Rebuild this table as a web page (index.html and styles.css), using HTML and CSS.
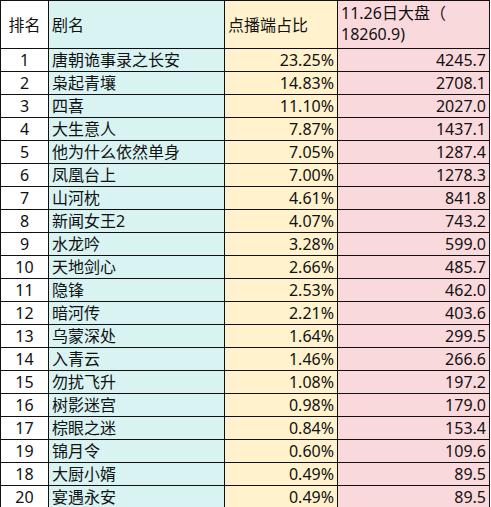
FILE: index.html
```html
<!DOCTYPE html>
<html lang="zh-CN">

<head>
    <meta charset="UTF-8">
    <title>点播端占比</title>
    <link rel="stylesheet" href="styles.css">
</head>

<body>
    <!-- 排行表 -->
    <table class="rank">
        <colgroup>
            <col class="c-rank">
            <col class="c-name">
            <col class="c-pct">
            <col class="c-val">
        </colgroup>
        <tr class="head">
            <td class="rank-no">排名</td>
            <td class="name">剧名</td>
            <td class="pct">点播端占比</td>
            <td class="val">11.26日大盘（ 18260.9)</td>
        </tr>
        <tr><td class="rank-no">1</td><td class="name">唐朝诡事录之长安</td><td class="pct">23.25%</td><td class="val">4245.7</td></tr>
        <tr><td class="rank-no">2</td><td class="name">枭起青壤</td><td class="pct">14.83%</td><td class="val">2708.1</td></tr>
        <tr><td class="rank-no">3</td><td class="name">四喜</td><td class="pct">11.10%</td><td class="val">2027.0</td></tr>
        <tr><td class="rank-no">4</td><td class="name">大生意人</td><td class="pct">7.87%</td><td class="val">1437.1</td></tr>
        <tr><td class="rank-no">5</td><td class="name">他为什么依然单身</td><td class="pct">7.05%</td><td class="val">1287.4</td></tr>
        <tr><td class="rank-no">6</td><td class="name">凤凰台上</td><td class="pct">7.00%</td><td class="val">1278.3</td></tr>
        <tr><td class="rank-no">7</td><td class="name">山河枕</td><td class="pct">4.61%</td><td class="val">841.8</td></tr>
        <tr><td class="rank-no">8</td><td class="name">新闻女王2</td><td class="pct">4.07%</td><td class="val">743.2</td></tr>
        <tr><td class="rank-no">9</td><td class="name">水龙吟</td><td class="pct">3.28%</td><td class="val">599.0</td></tr>
        <tr><td class="rank-no">10</td><td class="name">天地剑心</td><td class="pct">2.66%</td><td class="val">485.7</td></tr>
        <tr><td class="rank-no">11</td><td class="name">隐锋</td><td class="pct">2.53%</td><td class="val">462.0</td></tr>
        <tr><td class="rank-no">12</td><td class="name">暗河传</td><td class="pct">2.21%</td><td class="val">403.6</td></tr>
        <tr><td class="rank-no">13</td><td class="name">乌蒙深处</td><td class="pct">1.64%</td><td class="val">299.5</td></tr>
        <tr><td class="rank-no">14</td><td class="name">入青云</td><td class="pct">1.46%</td><td class="val">266.6</td></tr>
        <tr><td class="rank-no">15</td><td class="name">勿扰飞升</td><td class="pct">1.08%</td><td class="val">197.2</td></tr>
        <tr><td class="rank-no">16</td><td class="name">树影迷宫</td><td class="pct">0.98%</td><td class="val">179.0</td></tr>
        <tr><td class="rank-no">17</td><td class="name">棕眼之迷</td><td class="pct">0.84%</td><td class="val">153.4</td></tr>
        <tr><td class="rank-no">19</td><td class="name">锦月令</td><td class="pct">0.60%</td><td class="val">109.6</td></tr>
        <tr><td class="rank-no">18</td><td class="name">大厨小婿</td><td class="pct">0.49%</td><td class="val">89.5</td></tr>
        <tr><td class="rank-no">20</td><td class="name">宴遇永安</td><td class="pct">0.49%</td><td class="val">89.5</td></tr>
    </table>
</body>

</html>
```

FILE: styles.css
```css
/* 页面 */
body {
    margin: 0;
    background: #fff;
    font-family: "Noto Sans", "Noto Sans CJK SC", sans-serif;
    font-size: 16px;
    color: #111;
}

/* 表格整体 */
.rank {
    border-collapse: collapse;
    table-layout: fixed;
    width: 490px;
}

.c-rank { width: 48px; }
.c-name { width: 176px; }
.c-pct { width: 113px; }
.c-val { width: 152px; }

.rank td {
    border: 1px solid #111;
    height: 22px;
    padding: 0 3px;
    line-height: 20px;
    white-space: nowrap;
    overflow: hidden;
}

.rank .head td {
    height: 45px;
}

/* 各列颜色与对齐 */
.rank-no {
    text-align: center;
    background: #fff;
}

.name {
    background: #d8f3f2;
}

.pct {
    text-align: right;
    background: #fff2cd;
}

.val {
    text-align: right;
    background: #fad9dd;
}

.head .val {
    text-align: left;
    white-space: normal;
    vertical-align: top;
    padding-top: 2px;
    line-height: 21px;
}

.head .name,
.head .pct {
    text-align: left;
}
```
